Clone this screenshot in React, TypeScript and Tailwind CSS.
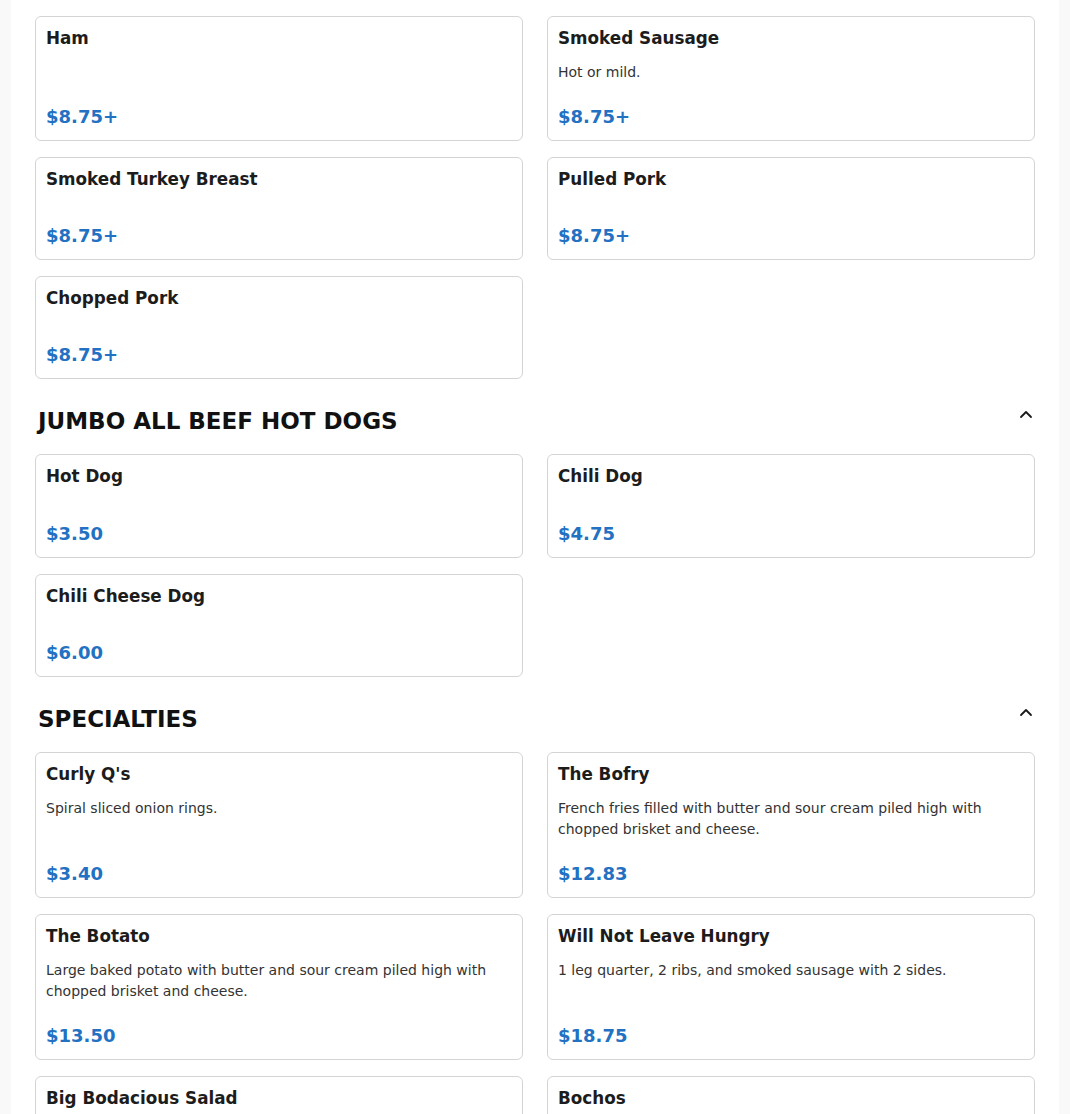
import React from "react";

type Item = { name: string; desc?: string; price: string };

const top: Item[] = [
  { name: "Ham", price: "$8.75+" },
  { name: "Smoked Sausage", desc: "Hot or mild.", price: "$8.75+" },
  { name: "Smoked Turkey Breast", price: "$8.75+" },
  { name: "Pulled Pork", price: "$8.75+" },
  { name: "Chopped Pork", price: "$8.75+" },
];

const hotdogs: Item[] = [
  { name: "Hot Dog", price: "$3.50" },
  { name: "Chili Dog", price: "$4.75" },
  { name: "Chili Cheese Dog", price: "$6.00" },
];

const specialties: Item[] = [
  { name: "Curly Q's", desc: "Spiral sliced onion rings.", price: "$3.40" },
  {
    name: "The Bofry",
    desc: "French fries filled with butter and sour cream piled high with chopped brisket and cheese.",
    price: "$12.83",
  },
  {
    name: "The Botato",
    desc: "Large baked potato with butter and sour cream piled high with chopped brisket and cheese.",
    price: "$13.50",
  },
  {
    name: "Will Not Leave Hungry",
    desc: "1 leg quarter, 2 ribs, and smoked sausage with 2 sides.",
    price: "$18.75",
  },
  { name: "Big Bodacious Salad", price: "$11.50" },
  { name: "Bochos", price: "$9.50" },
];

function Card({ item }: { item: Item }) {
  return (
    <div className="flex flex-col rounded-md border border-[#d4d4d4] bg-white px-[10px] pt-[11px] pb-[10px]">
      <div className="mb-[14px] text-[16.8px] font-bold leading-[1.2] text-[#1c1c1c]">{item.name}</div>
      {item.desc && <div className="pb-[1px] text-[14px] leading-[21px] text-[#333333]">{item.desc}</div>}
      <div className="mt-auto pt-5 text-[18px] font-bold leading-[26px] text-[#2271c2]">{item.price}</div>
    </div>
  );
}

function Grid({ items }: { items: Item[] }) {
  return (
    <div className="grid grid-cols-2 gap-x-6 gap-y-4">
      {items.map((it) => (
        <Card key={it.name} item={it} />
      ))}
    </div>
  );
}

function Header({ title }: { title: string }) {
  return (
    <div className="mt-[28px] mb-[19px] flex items-start justify-between">
      <h2 className="pl-[3px] text-[23px] font-bold leading-[28px] text-[#111111]">{title}</h2>
      <svg width="16" height="16" viewBox="0 0 16 16" className="mr-[1px]" fill="none">
        <polyline points="3,10 8,5 13,10" stroke="#1a1a1a" strokeWidth="1.8" strokeLinecap="round" strokeLinejoin="round" />
      </svg>
    </div>
  );
}

export default function App() {
  return (
    <div className="min-h-screen bg-[#f9f9f9]" style={{ fontFamily: "'DejaVu Sans', sans-serif" }}>
      <div className="mx-auto w-[1048px] bg-white px-6 pt-4 pb-10">
        <Grid items={top} />
        <Header title="JUMBO ALL BEEF HOT DOGS" />
        <Grid items={hotdogs} />
        <Header title="SPECIALTIES" />
        <Grid items={specialties} />
      </div>
    </div>
  );
}
